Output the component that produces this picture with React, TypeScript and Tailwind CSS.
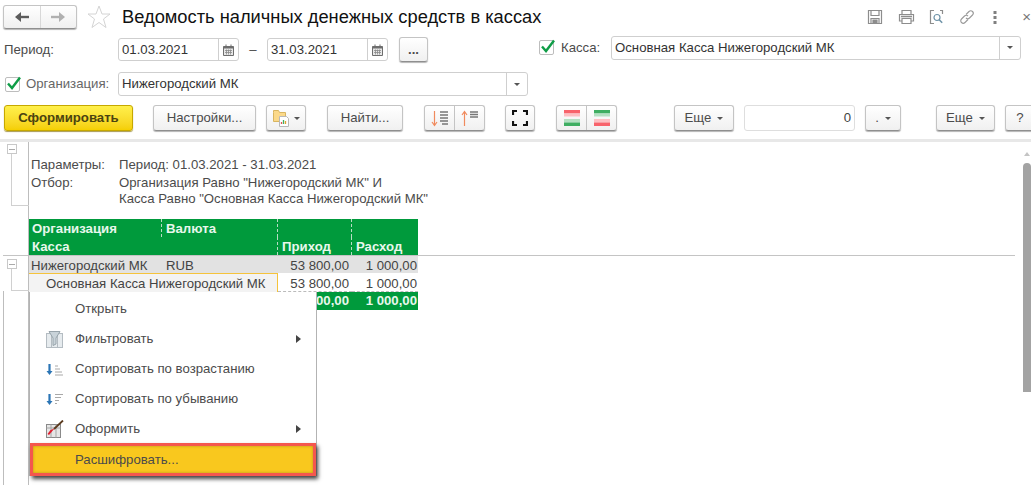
const font = { fontFamily: '"Liberation Sans", Arial, sans-serif' };

const btn =
  "flex items-center justify-center rounded-[3px] border border-[#c4c4c4] border-b-[#8f8f8f] bg-gradient-to-b from-white to-[#f0f0f0] shadow-[0_1px_1px_#b5b5b5] text-[#4b4b4b] text-[13.2px]";

function Check() {
  return (
    <div className="relative h-[15px] w-[15px] shrink-0 rounded-[2px] border border-[#bdbdbd] bg-white">
      <svg className="absolute -top-[3px] left-0" width="16" height="16" viewBox="0 0 16 16">
        <path d="M2 8.5 L6 13 L14 2.5" fill="none" stroke="#0f9d47" strokeWidth="2.4" />
      </svg>
    </div>
  );
}

function CalendarIcon() {
  return (
    <svg width="11" height="12" viewBox="0 0 11 12">
      <path d="M0.5 2.5h10v9h-10z" fill="#e8e8e8" stroke="#6e6e6e" />
      <path d="M0.5 2.5h10v2h-10z" fill="#6e6e6e" />
      <path d="M3 0.5v2M8 0.5v2" stroke="#6e6e6e" />
      <path d="M2 6.5h7M2 8.5h7M3.5 5.5v5M5.5 5.5v5M7.5 5.5v5" stroke="#8a8a8a" strokeWidth="0.8" />
    </svg>
  );
}

function DateField({ value }: { value: string }) {
  return (
    <div className="flex h-[23px] w-[121px] items-center rounded-[3px] border border-[#cfcfcf] bg-white text-[13.2px] text-[#333]">
      <span className="flex-1 pl-[3px]">{value}</span>
      <span className="flex h-full w-[20px] items-center justify-center border-l border-[#cfcfcf]">
        <CalendarIcon />
      </span>
    </div>
  );
}

function Caret() {
  return <span className="inline-block h-0 w-0 border-x-[3px] border-t-[3px] border-x-transparent border-t-[#555]" />;
}

function Combo({ value, width }: { value: string; width: string }) {
  return (
    <div className={`flex h-[24px] items-center rounded-[3px] border border-[#cfcfcf] bg-white text-[13.2px] text-[#333] ${width}`}>
      <span className="flex-1 pl-[3px]">{value}</span>
      <span className="flex h-full w-[21px] items-center justify-center border-l border-[#cfcfcf]">
        <Caret />
      </span>
    </div>
  );
}

function TopIcons() {
  return (
    <div className="ml-auto flex items-center text-[#8d8d8d]">
      <svg width="16" height="16" viewBox="0 0 16 16" fill="none" stroke="#8d8d8d" strokeWidth="1.2">
        <path d="M1.5 1.5h13v13h-13z" />
        <path d="M4 1.5v5h8v-5M4 14.5v-5h8v5" />
        <path d="M6 11h4v3.5H6z" fill="#8d8d8d" />
      </svg>
      <svg className="ml-[15px]" width="17" height="16" viewBox="0 0 17 16" fill="none" stroke="#8d8d8d" strokeWidth="1.2">
        <path d="M4 5V1.5h9V5M4 12H1.5V5.5h14V12H13" />
        <path d="M4 9.5h9v5H4z" />
        <path d="M3 7.5h11" strokeWidth="1.6" />
      </svg>
      <svg className="ml-[14px]" width="15" height="16" viewBox="0 0 15 16" fill="none" stroke="#8d8d8d" strokeWidth="1.2">
        <path d="M5 14.5H1.5v-13H5M13.5 5V1.5H11" />
        <circle cx="8" cy="8.5" r="3" stroke="#6f93a8" />
        <path d="M10.2 10.7l3 3" stroke="#6f93a8" strokeWidth="1.6" />
      </svg>
      <svg className="ml-[15px]" width="16" height="16" viewBox="0 0 16 16" fill="none" stroke="#9a9a9a" strokeWidth="1.1">
        <path d="M7 5.5l3-3c1-1 2.5-1 3.5 0s1 2.5 0 3.5l-3 3c-1 1-2.5 1-3.5 0" />
        <path d="M9 10.5l-3 3c-1 1-2.5 1-3.5 0s-1-2.5 0-3.5l3-3c1-1 2.5-1 3.5 0" />
      </svg>
      <svg className="ml-[18px]" width="4" height="14" viewBox="0 0 4 14" fill="#808080">
        <rect x="0.5" y="1" width="3" height="3" />
        <rect x="0.5" y="6" width="3" height="3" />
        <rect x="0.5" y="11" width="3" height="3" />
      </svg>
      <span className="ml-[25px] text-[15px] leading-none text-[#777]">×</span>
    </div>
  );
}

function SortDownIcon() {
  return (
    <svg width="18" height="17" viewBox="0 0 18 17">
      <path d="M3.5 1v14M1 12l2.5 3.5L6 12" fill="none" stroke="#f08a5d" strokeWidth="1.2" />
      <path d="M9 2h8M9 5h8M9 8h8M9 11h8M11 14h6" stroke="#777" strokeWidth="1.6" />
    </svg>
  );
}

function SortUpIcon() {
  return (
    <svg width="18" height="17" viewBox="0 0 18 17">
      <path d="M3.5 16V2M1 5l2.5-3.5L6 5" fill="none" stroke="#f08a5d" strokeWidth="1.2" />
      <path d="M9 2h8M9 4.5h8M9 7h8" stroke="#777" strokeWidth="1.6" />
    </svg>
  );
}

function FullscreenIcon() {
  return (
    <svg width="16" height="16" viewBox="0 0 16 16" fill="none" stroke="#111" strokeWidth="2.2">
      <path d="M1 5V1h4M11 1h4v4M1 11v4h4M11 15h4v-4" />
    </svg>
  );
}

function BarsIcon({ flip }: { flip?: boolean }) {
  const a = flip ? "#3fae62" : "#f8636b";
  const b = flip ? "#f8636b" : "#3fae62";
  const a2 = flip ? "#b5e0c3" : "#fdc0c3";
  const b2 = flip ? "#fdc0c3" : "#b5e0c3";
  return (
    <svg width="16" height="16" viewBox="0 0 16 16">
      <rect y="0" width="16" height="3.5" fill={a} />
      <rect y="3.5" width="16" height="3" fill={a2} />
      <rect y="9" width="16" height="3.5" fill={b2} />
      <rect y="12.5" width="16" height="3.5" fill={b} />
    </svg>
  );
}

function Toolbar() {
  return (
    <div className="mt-[9px] flex h-[26px] items-stretch pl-[4px] [&>*]:shrink-0">
      <button className="flex w-[129px] items-center justify-center rounded-[3px] border border-[#c6a800] bg-gradient-to-b from-[#fff04a] to-[#f5cf00] text-[13.2px] font-bold text-[#4a4310] shadow-[0_1px_1px_#a89a50]">
        Сформировать
      </button>
      <button className={`${btn} ml-[20px] w-[103px]`}>Настройки...</button>
      <button className={`${btn} ml-[10px] w-[40px] gap-[5px]`}>
        <svg width="16" height="18" viewBox="0 0 16 18">
          <path d="M0.5 3.5V1.5h5l1 2h6v9H.5z" fill="#fbd98a" stroke="#d8b560" />
          <path d="M6.5 7.5h7l2 2v8h-9z" fill="#fff" stroke="#b8b8b8" />
          <path d="M8.5 15v-2" stroke="#e05555" strokeWidth="1.3" />
          <path d="M10.5 15v-4" stroke="#3fae62" strokeWidth="1.3" />
          <path d="M12.5 15v-3" stroke="#e0a030" strokeWidth="1.3" />
        </svg>
        <Caret />
      </button>
      <button className={`${btn} ml-[21px] w-[76px]`}>Найти...</button>
      <div className={`${btn} ml-[21px] w-[61px]`}>
        <span className="flex h-full flex-1 items-center justify-center border-r border-[#c4c4c4]"><SortDownIcon /></span>
        <span className="flex h-full flex-1 items-center justify-center"><SortUpIcon /></span>
      </div>
      <button className={`${btn} ml-[20px] w-[30px]`}><FullscreenIcon /></button>
      <div className={`${btn} ml-[21px] w-[61px]`}>
        <span className="flex h-full flex-1 items-center justify-center border-r border-[#c4c4c4]"><BarsIcon /></span>
        <span className="flex h-full flex-1 items-center justify-center"><BarsIcon flip /></span>
      </div>
      <button className={`${btn} ml-[57px] w-[60px] gap-[6px]`}>Еще <Caret /></button>
      <div className="ml-[10px] flex w-[111px] items-center justify-end rounded-[3px] border border-[#dedede] bg-white pr-[3px] text-[13.2px] text-[#444]">0</div>
      <button className={`${btn} ml-[10px] w-[36px] gap-[6px]`}>. <Caret /></button>
      <button className={`${btn} ml-[35px] w-[59px] gap-[6px]`}>Еще <Caret /></button>
      <button className={`${btn} ml-[10px] w-[30px]`}>?</button>
    </div>
  );
}

function Minus() {
  return (
    <div className="flex h-[10px] w-[10px] items-center justify-center border border-[#c8c8c8] bg-white">
      <div className="h-px w-[6px] bg-[#aaa]" />
    </div>
  );
}

const dashR = "border-r border-dashed border-r-[#b8dcc4]";

function HeaderTable() {
  return (
    <div className="grid w-[389px] grid-cols-[133px_116px_74px_66px] bg-[#009a3c] text-[13.2px] font-bold leading-[20px] text-[#e8f7ec] [&>*]:h-[18px]">
      <div className={`pl-[3px] ${dashR}`}>Организация</div>
      <div className={`pl-[4px] ${dashR}`}>Валюта</div>
      <div className={dashR} />
      <div />
      <div className={`col-span-2 pl-[3px] ${dashR}`}>Касса</div>
      <div className={`pl-[4px] ${dashR}`}>Приход</div>
      <div className="pl-[4px]">Расход</div>
    </div>
  );
}

function DataTable() {
  return (
    <div className="grid w-[389px] grid-cols-[133px_116px_74px_66px] text-[13.2px] text-[#444]">
      <div className="h-[17px] bg-[#e2e2e2] pl-[2px] leading-[19px]">Нижегородский МК</div>
      <div className="h-[17px] bg-[#e2e2e2] pl-[4px] leading-[19px]">RUB</div>
      <div className="h-[17px] bg-[#e2e2e2] pr-[3px] text-right leading-[19px]">53 800,00</div>
      <div className="h-[17px] bg-[#e2e2e2] pr-[1px] text-right leading-[19px]">1 000,00</div>
      <div className="col-span-2 h-[19px] border-t border-r border-[#f5c33b] border-b-0 bg-[#f3f3f3] pl-[17px] leading-[20px]">
        Основная Касса Нижегородский МК
      </div>
      <div className="h-[19px] border-b border-dashed border-[#bbb] pr-[3px] text-right leading-[21px]">53 800,00</div>
      <div className="h-[19px] border-b border-dashed border-[#bbb] pr-[1px] text-right leading-[21px]">1 000,00</div>
      <div className="col-span-2 h-[18px] bg-[#009a3c]" />
      <div className="h-[18px] bg-[#009a3c] pr-[3px] text-right font-bold leading-[18px] text-[#e8f7ec]">53 800,00</div>
      <div className="h-[18px] bg-[#009a3c] pr-[1px] text-right font-bold leading-[18px] text-[#e8f7ec]">1 000,00</div>
    </div>
  );
}

function FilterIcon() {
  return (
    <svg width="17" height="17" viewBox="0 0 17 17">
      <rect x="0.5" y="2.5" width="16" height="14" fill="#e6ebee" stroke="#b4bcc2" />
      <path d="M5.5 3v13M11.5 3v13" stroke="#b4bcc2" />
      <path d="M3 0.5h11L10 7v6l-3 1.5V7z" fill="#c9d3d9" stroke="#98a4ab" />
    </svg>
  );
}

function SortAscIcon() {
  return (
    <svg width="17" height="13" viewBox="0 0 17 13">
      <path d="M3.5 1v9" stroke="#2b75b5" strokeWidth="2.2" />
      <path d="M0.5 8h6L3.5 12z" fill="#2b75b5" />
      <path d="M9 3h3M9 6h5M9 9h7M9 12h8" stroke="#a8a8a8" />
    </svg>
  );
}

function SortDescIcon() {
  return (
    <svg width="17" height="13" viewBox="0 0 17 13">
      <path d="M3.5 1v9" stroke="#2b75b5" strokeWidth="2.2" />
      <path d="M0.5 8h6L3.5 12z" fill="#2b75b5" />
      <path d="M9 1.5h8M9 4.5h6M9 7.5h4M9 10.5h2" stroke="#a8a8a8" />
    </svg>
  );
}

function FormatIcon() {
  return (
    <svg width="18" height="18" viewBox="0 0 18 18">
      <rect x="0.5" y="4.5" width="14" height="13" fill="#e6e6e6" stroke="#8a8a8a" />
      <path d="M0.5 8h14M5 4.5v13M10 4.5v13" stroke="#a5a5a5" />
      <path d="M17 0.5L8 9" stroke="#5b3a1e" strokeWidth="1.8" />
      <path d="M8.5 8.5L3 15l-1.5-1 3-4z" fill="#e02030" />
    </svg>
  );
}

const menuItem = "flex h-[30px] items-center pt-[2px] pr-[15px] text-[13.2px] text-[#4b4b4b]";

function Arrow() {
  return <span className="ml-auto h-0 w-0 border-y-[4px] border-l-[5px] border-y-transparent border-l-[#444]" />;
}

function ContextMenu() {
  return (
    <div className="absolute left-[29px] top-[292px] w-[288px] border-x border-[#b3b3b3] bg-white pt-[1px]">
      {[
        { label: "Открыть" },
        { label: "Фильтровать", icon: <FilterIcon />, arrow: true },
        { label: "Сортировать по возрастанию", icon: <SortAscIcon /> },
        { label: "Сортировать по убыванию", icon: <SortDescIcon /> },
        { label: "Оформить", icon: <FormatIcon />, arrow: true },
      ].map((item) => (
        <div key={item.label} className={menuItem}>
          <span className="flex w-[45px] justify-start pl-[16px]">{item.icon}</span>
          {item.label}
          {item.arrow && <Arrow />}
        </div>
      ))}
      <div className="flex h-[33px] items-center border-[3px] border-[#f4574e] bg-[#f9c81e] text-[13.2px] text-[#4b4b4b] shadow-[2px_3px_4px_#444,inset_0_0_3px_#b8901a]">
        <span className="pl-[42px]">Расшифровать...</span>
      </div>
    </div>
  );
}

export default function App() {
  return (
    <div className="relative h-[487px] w-[1031px] overflow-hidden bg-white" style={font}>
      {/* заголовок */}
      <div className="flex h-[30px] items-center pl-[3px] pt-[3px]">
        <div className={`${btn} h-[24px] w-[74px]`}>
          <span className="flex h-full flex-1 items-center justify-center border-r border-[#d8d8d8]">
            <svg width="14" height="12" viewBox="0 0 14 12"><path d="M14 6H5" stroke="#5c5c5c" strokeWidth="2.4" /><path d="M0 6l6-5v10z" fill="#5c5c5c" /></svg>
          </span>
          <span className="flex h-full flex-1 items-center justify-center">
            <svg width="14" height="12" viewBox="0 0 14 12"><path d="M0 6h9" stroke="#b0b0b0" strokeWidth="2.4" /><path d="M14 6L8 1v10z" fill="#b0b0b0" /></svg>
          </span>
        </div>
        <svg className="ml-[10px]" width="24" height="24" viewBox="0 0 24 24">
          <path d="M12 1l3 8h8l-6.5 5 2.5 8.5-7-5-7 5L7.5 14 1 9h8z" fill="#fff" stroke="#d4d4d4" />
        </svg>
        <h1 className="ml-[11px] text-[18.3px] font-normal text-[#111]">Ведомость наличных денежных средств в кассах</h1>
        <TopIcons />
      </div>

      {/* период и касса */}
      <div className="mt-[7px] flex h-[25px] items-center text-[13.2px] text-[#4b4b4b]">
        <span className="w-[118px] pl-[4px]">Период:</span>
        <DateField value="01.03.2021" />
        <span className="w-[28px] text-center">–</span>
        <DateField value="31.03.2021" />
        <button className={`${btn} ml-[11px] h-[25px] w-[29px] font-bold`}>...</button>
        <div className="ml-[111px] -mt-[4px] flex items-center">
          <Check />
          <span className="ml-[7px] w-[50px]">Касса:</span>
          <Combo value="Основная Касса Нижегородский МК" width="w-[410px]" />
        </div>
      </div>

      {/* организация */}
      <div className="mt-[10px] flex h-[24px] items-center text-[13.2px] text-[#666]">
        <div className="ml-[5px]"><Check /></div>
        <span className="ml-[6px] w-[92px]">Организация:</span>
        <Combo value="Нижегородский МК" width="w-[410px]" />
      </div>

      <Toolbar />

      {/* отчет */}
      <div className="mt-[8px] h-[3px] w-full bg-[#e8e8e8]" />
      <div className="flex h-[343px]">
        <div className="relative w-[29px] shrink-0 border-r border-[#bdbdbd]">
          <div className="absolute left-[7px] top-[2px]"><Minus /></div>
          <div className="absolute left-[11px] top-[12px] h-[52px] w-[18px] border-b border-l border-[#d0d0d0]" />
          <div className="absolute left-[7px] top-[117px]"><Minus /></div>
          <div className="absolute left-[11px] top-[127px] h-[22px] w-[18px] border-b border-l border-[#d0d0d0]" />
          <div className="absolute left-[3px] top-[149px] h-[194px] border-l border-[#bdbdbd]" />
        </div>
        <div className="flex-1 pr-[8px]">
          <div className="flex h-[77px] pl-[2px] pt-[15px] text-[13.2px] leading-[16.5px] text-[#4b4b4b]">
            <div className="w-[88px]">
              <div>Параметры:</div>
              <div className="mt-[1px]">Отбор:</div>
            </div>
            <div>
              <div>Период: 01.03.2021 - 31.03.2021</div>
              <div className="mt-[1px]">Организация Равно "Нижегородский МК" И</div>
              <div>Касса Равно "Основная Касса Нижегородский МК"</div>
            </div>
          </div>
          <HeaderTable />
          <div className="-ml-[26px] h-px bg-[#c4c4c4]" />
          <DataTable />
        </div>
        <div className="relative w-[8px] shrink-0">
          <span className="absolute left-[1px] top-[10px] h-0 w-0 border-x-[3px] border-b-[4px] border-x-transparent border-b-[#c4c4c4]" />
          <div className="absolute top-[21px] h-[229px] w-[8px] rounded-t-[4px] bg-[#a3a3a3]" />
        </div>
      </div>

      <ContextMenu />
    </div>
  );
}
